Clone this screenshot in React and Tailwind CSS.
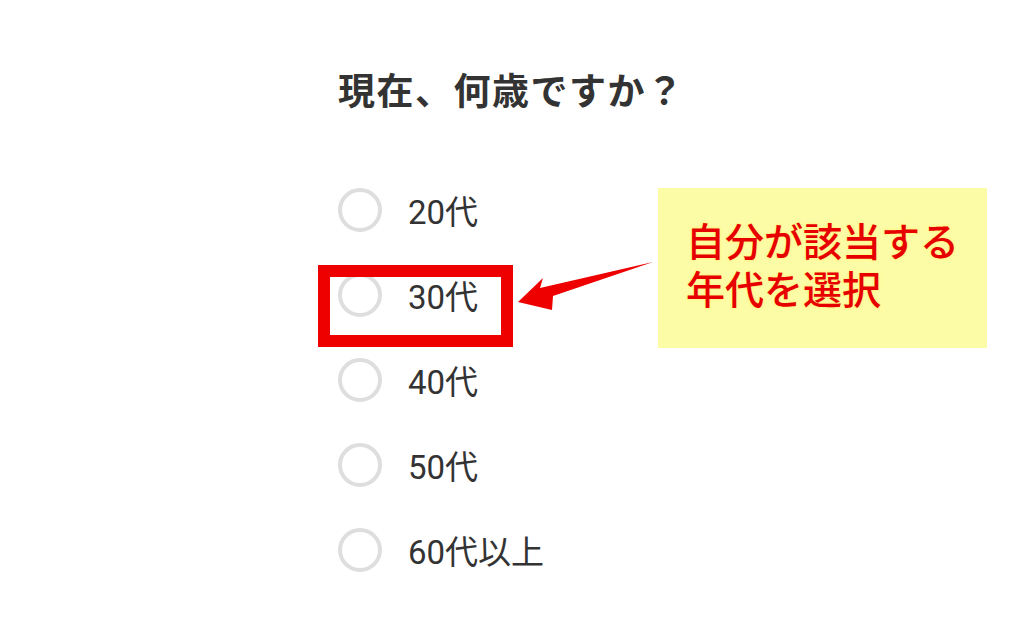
import React from 'react';

const options = ['20代', '30代', '40代', '50代', '60代以上'];

function Radio({ label }) {
  return (
    <div className="flex items-center h-[85px]">
      <span className="w-[44px] h-[44px] rounded-full border-[4px] border-[#dedede] bg-white shrink-0" />
      <span className="ml-[26px] text-[33px] leading-none text-[#333333] pt-[5px]">{label}</span>
    </div>
  );
}

export default function App() {
  const font = { fontFamily: 'Roboto, "Noto Sans CJK JP", "Noto Sans", sans-serif' };
  return (
    <div className="relative w-[1024px] h-[619px] bg-white overflow-hidden" style={font}>
      <div className="pl-[338px] pt-[74px] flex flex-col">
        <h1 className="text-[37px] leading-none font-bold text-[#333333] tracking-[1.5px]">現在、何歳ですか？</h1>
        <div className="mt-[56px] flex flex-col">
          {options.map((o) => (
            <Radio key={o} label={o} />
          ))}
        </div>
      </div>

      {/* red highlight around 30代 */}
      <div className="absolute left-[318px] top-[265px] w-[195px] h-[82px] border-[12px] border-[#ee0000]" />

      {/* arrow */}
      <svg className="absolute left-0 top-0" width="1024" height="619">
        <polygon points="518,302 543,278 540,288 653,262 553,296 552,310" fill="#ee0000" />
      </svg>

      {/* callout */}
      <div className="absolute left-[658px] top-[188px] w-[329px] h-[160px] bg-[#fdfca6] pl-[28px] pt-[36px] flex flex-col">
        <div
          className="text-[39px] leading-none h-[48px] text-[#e60000] font-medium"
          style={{ textShadow: '0 0 2px #fff27a, 0 0 3px #fff27a' }}
        >
          自分が該当する
        </div>
        <div
          className="text-[39px] leading-none text-[#e60000] font-medium"
          style={{ textShadow: '0 0 2px #fff27a, 0 0 3px #fff27a' }}
        >
          年代を選択
        </div>
      </div>
    </div>
  );
}
